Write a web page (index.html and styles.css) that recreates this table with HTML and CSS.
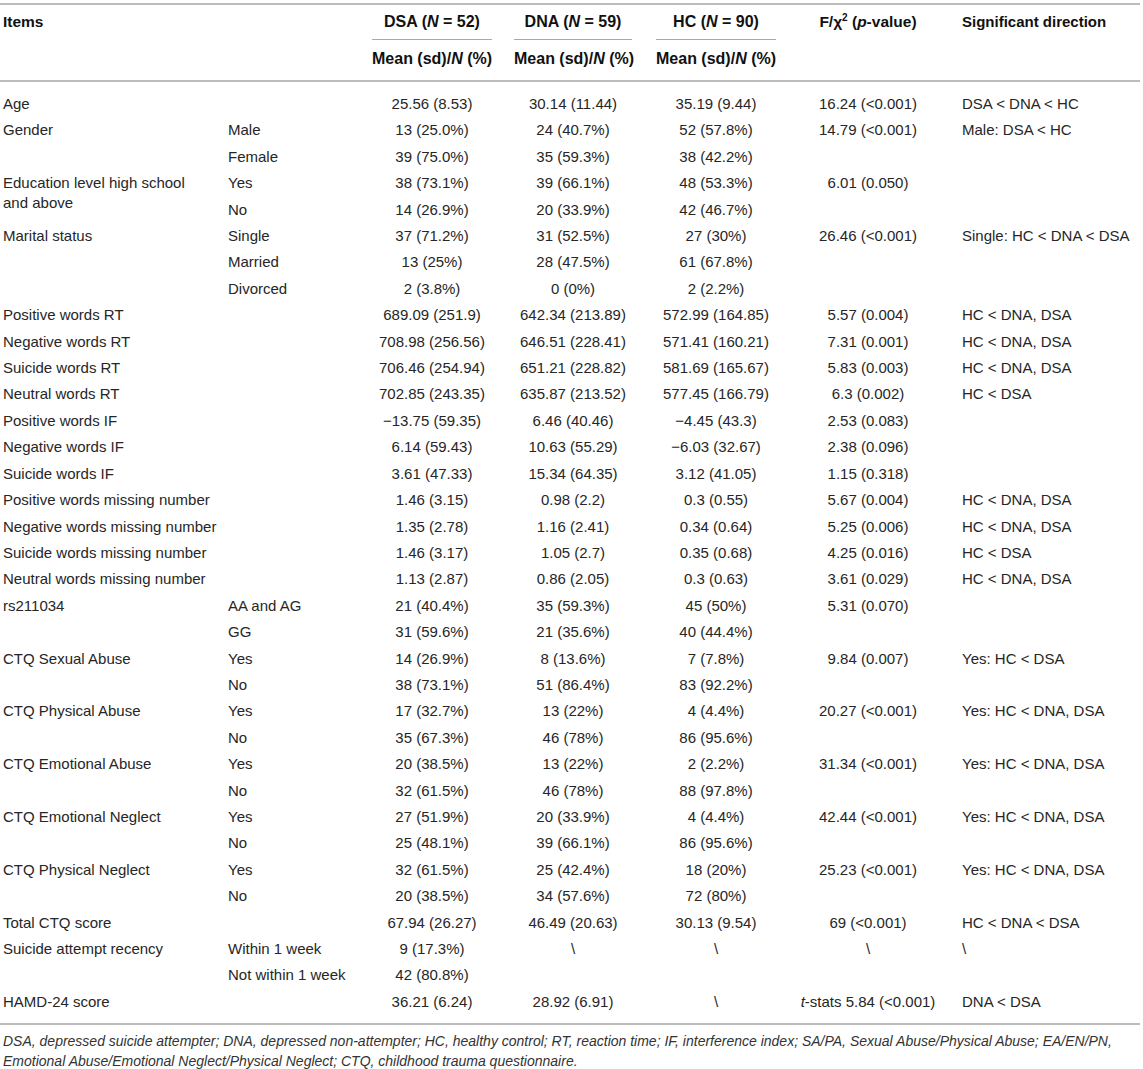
FILE: index.html
```html
<!DOCTYPE html>
<html lang="en">
<head>
<meta charset="utf-8">
<title>Table</title>
<link rel="stylesheet" href="styles.css">
</head>
<body>
<div class="wrap">
<table class="tbl">
<colgroup>
<col class="c1"><col class="c2"><col class="c3"><col class="c4"><col class="c5"><col class="c6"><col class="c7">
</colgroup>
<thead>
<tr class="h1">
<th class="left" rowspan="2" colspan="2">Items</th>
<th class="grp"><div class="ul">DSA (<i>N</i> = 52)</div></th>
<th class="grp g2"><div class="ul">DNA (<i>N</i> = 59)</div></th>
<th class="grp g2"><div class="ul">HC (<i>N</i> = 90)</div></th>
<th class="ctr" rowspan="2">F/χ<sup>2</sup> (<i>p</i>-value)</th>
<th class="left sig" rowspan="2">Significant direction</th>
</tr>
<tr class="h2">
<th class="grp">Mean (sd)/<i>N</i> (%)</th>
<th class="grp g2">Mean (sd)/<i>N</i> (%)</th>
<th class="grp g2">Mean (sd)/<i>N</i> (%)</th>
</tr>
</thead>
<tbody>
<tr class="first"><td colspan="2">Age</td><td>25.56 (8.53)</td><td>30.14 (11.44)</td><td>35.19 (9.44)</td><td>16.24 (&lt;0.001)</td><td class="sig">DSA &lt; DNA &lt; HC</td></tr>
<tr><td>Gender</td><td class="sub">Male</td><td>13 (25.0%)</td><td>24 (40.7%)</td><td>52 (57.8%)</td><td>14.79 (&lt;0.001)</td><td class="sig">Male: DSA &lt; HC</td></tr>
<tr><td></td><td class="sub">Female</td><td>39 (75.0%)</td><td>35 (59.3%)</td><td>38 (42.2%)</td><td></td><td class="sig"></td></tr>
<tr><td class="edu" rowspan="2">Education level high school and above</td><td class="sub">Yes</td><td>38 (73.1%)</td><td>39 (66.1%)</td><td>48 (53.3%)</td><td>6.01 (0.050)</td><td class="sig"></td></tr>
<tr><td class="sub">No</td><td>14 (26.9%)</td><td>20 (33.9%)</td><td>42 (46.7%)</td><td></td><td class="sig"></td></tr>
<tr><td>Marital status</td><td class="sub">Single</td><td>37 (71.2%)</td><td>31 (52.5%)</td><td>27 (30%)</td><td>26.46 (&lt;0.001)</td><td class="sig">Single: HC &lt; DNA &lt; DSA</td></tr>
<tr><td></td><td class="sub">Married</td><td>13 (25%)</td><td>28 (47.5%)</td><td>61 (67.8%)</td><td></td><td class="sig"></td></tr>
<tr><td></td><td class="sub">Divorced</td><td>2 (3.8%)</td><td>0 (0%)</td><td>2 (2.2%)</td><td></td><td class="sig"></td></tr>
<tr><td colspan="2">Positive words RT</td><td>689.09 (251.9)</td><td>642.34 (213.89)</td><td>572.99 (164.85)</td><td>5.57 (0.004)</td><td class="sig">HC &lt; DNA, DSA</td></tr>
<tr><td colspan="2">Negative words RT</td><td>708.98 (256.56)</td><td>646.51 (228.41)</td><td>571.41 (160.21)</td><td>7.31 (0.001)</td><td class="sig">HC &lt; DNA, DSA</td></tr>
<tr><td colspan="2">Suicide words RT</td><td>706.46 (254.94)</td><td>651.21 (228.82)</td><td>581.69 (165.67)</td><td>5.83 (0.003)</td><td class="sig">HC &lt; DNA, DSA</td></tr>
<tr><td colspan="2">Neutral words RT</td><td>702.85 (243.35)</td><td>635.87 (213.52)</td><td>577.45 (166.79)</td><td>6.3 (0.002)</td><td class="sig">HC &lt; DSA</td></tr>
<tr><td colspan="2">Positive words IF</td><td>−13.75 (59.35)</td><td>6.46 (40.46)</td><td>−4.45 (43.3)</td><td>2.53 (0.083)</td><td class="sig"></td></tr>
<tr><td colspan="2">Negative words IF</td><td>6.14 (59.43)</td><td>10.63 (55.29)</td><td>−6.03 (32.67)</td><td>2.38 (0.096)</td><td class="sig"></td></tr>
<tr><td colspan="2">Suicide words IF</td><td>3.61 (47.33)</td><td>15.34 (64.35)</td><td>3.12 (41.05)</td><td>1.15 (0.318)</td><td class="sig"></td></tr>
<tr><td colspan="2">Positive words missing number</td><td>1.46 (3.15)</td><td>0.98 (2.2)</td><td>0.3 (0.55)</td><td>5.67 (0.004)</td><td class="sig">HC &lt; DNA, DSA</td></tr>
<tr><td colspan="2">Negative words missing number</td><td>1.35 (2.78)</td><td>1.16 (2.41)</td><td>0.34 (0.64)</td><td>5.25 (0.006)</td><td class="sig">HC &lt; DNA, DSA</td></tr>
<tr><td colspan="2">Suicide words missing number</td><td>1.46 (3.17)</td><td>1.05 (2.7)</td><td>0.35 (0.68)</td><td>4.25 (0.016)</td><td class="sig">HC &lt; DSA</td></tr>
<tr><td colspan="2">Neutral words missing number</td><td>1.13 (2.87)</td><td>0.86 (2.05)</td><td>0.3 (0.63)</td><td>3.61 (0.029)</td><td class="sig">HC &lt; DNA, DSA</td></tr>
<tr><td>rs211034</td><td class="sub">AA and AG</td><td>21 (40.4%)</td><td>35 (59.3%)</td><td>45 (50%)</td><td>5.31 (0.070)</td><td class="sig"></td></tr>
<tr><td></td><td class="sub">GG</td><td>31 (59.6%)</td><td>21 (35.6%)</td><td>40 (44.4%)</td><td></td><td class="sig"></td></tr>
<tr><td>CTQ Sexual Abuse</td><td class="sub">Yes</td><td>14 (26.9%)</td><td>8 (13.6%)</td><td>7 (7.8%)</td><td>9.84 (0.007)</td><td class="sig">Yes: HC &lt; DSA</td></tr>
<tr><td></td><td class="sub">No</td><td>38 (73.1%)</td><td>51 (86.4%)</td><td>83 (92.2%)</td><td></td><td class="sig"></td></tr>
<tr><td>CTQ Physical Abuse</td><td class="sub">Yes</td><td>17 (32.7%)</td><td>13 (22%)</td><td>4 (4.4%)</td><td>20.27 (&lt;0.001)</td><td class="sig">Yes: HC &lt; DNA, DSA</td></tr>
<tr><td></td><td class="sub">No</td><td>35 (67.3%)</td><td>46 (78%)</td><td>86 (95.6%)</td><td></td><td class="sig"></td></tr>
<tr><td>CTQ Emotional Abuse</td><td class="sub">Yes</td><td>20 (38.5%)</td><td>13 (22%)</td><td>2 (2.2%)</td><td>31.34 (&lt;0.001)</td><td class="sig">Yes: HC &lt; DNA, DSA</td></tr>
<tr><td></td><td class="sub">No</td><td>32 (61.5%)</td><td>46 (78%)</td><td>88 (97.8%)</td><td></td><td class="sig"></td></tr>
<tr><td>CTQ Emotional Neglect</td><td class="sub">Yes</td><td>27 (51.9%)</td><td>20 (33.9%)</td><td>4 (4.4%)</td><td>42.44 (&lt;0.001)</td><td class="sig">Yes: HC &lt; DNA, DSA</td></tr>
<tr><td></td><td class="sub">No</td><td>25 (48.1%)</td><td>39 (66.1%)</td><td>86 (95.6%)</td><td></td><td class="sig"></td></tr>
<tr><td>CTQ Physical Neglect</td><td class="sub">Yes</td><td>32 (61.5%)</td><td>25 (42.4%)</td><td>18 (20%)</td><td>25.23 (&lt;0.001)</td><td class="sig">Yes: HC &lt; DNA, DSA</td></tr>
<tr><td></td><td class="sub">No</td><td>20 (38.5%)</td><td>34 (57.6%)</td><td>72 (80%)</td><td></td><td class="sig"></td></tr>
<tr><td colspan="2">Total CTQ score</td><td>67.94 (26.27)</td><td>46.49 (20.63)</td><td>30.13 (9.54)</td><td>69 (&lt;0.001)</td><td class="sig">HC &lt; DNA &lt; DSA</td></tr>
<tr><td>Suicide attempt recency</td><td class="sub">Within 1 week</td><td>9 (17.3%)</td><td>\</td><td>\</td><td>\</td><td class="sig">\</td></tr>
<tr><td></td><td class="sub">Not within 1 week</td><td>42 (80.8%)</td><td></td><td></td><td></td><td class="sig"></td></tr>
<tr class="last"><td colspan="2">HAMD-24 score</td><td>36.21 (6.24)</td><td>28.92 (6.91)</td><td>\</td><td><i>t</i>-stats 5.84 (&lt;0.001)</td><td class="sig">DNA &lt; DSA</td></tr>
</tbody>
</table>
<div class="note"><i>DSA, depressed suicide attempter; DNA, depressed non-attempter; HC, healthy control; RT, reaction time; IF, interference index; SA/PA, Sexual Abuse/Physical Abuse; EA/EN/PN,<br>Emotional Abuse/Emotional Neglect/Physical Neglect; CTQ, childhood trauma questionnaire.</i></div>
</div>
</body>
</html>
```

FILE: styles.css
```css
html, body {
  margin: 0;
  padding: 0;
  background: #ffffff;
}
body {
  font-family: "Liberation Sans", Arial, Helvetica, sans-serif;
  color: #262626;
}
.wrap {
  width: 1140px;
  margin-top: 3px;
  border-top: 2px solid #bcbcbc;
}
.tbl {
  width: 1140px;
  table-layout: fixed;
  border-collapse: separate;
  border-spacing: 0;
  font-size: 15px;
  line-height: 18.4px;
}
.c1 { width: 214px; }
.c2 { width: 148px; }
.c3 { width: 140px; }
.c4 { width: 142px; }
.c5 { width: 144px; }
.c6 { width: 160px; }
.c7 { width: 192px; }
th {
  font-weight: bold;
  color: #111111;
  white-space: nowrap;
  line-height: 18px;
  font-size: 15.5px;
}
th.grp {
  font-size: 16px;
}
.h1 th {
  padding: 8px 0 0 0;
  vertical-align: top;
}
.h1 th.left { text-align: left; padding-left: 3px; }
.h1 th.ctr { text-align: center; }
.h1 th.sig { padding-left: 14px; font-size: 15px; }
.h1 th.grp {
  padding: 8px 10px 0 10px;
  text-align: center;
}
.h1 th.g2 { padding-left: 12px; padding-right: 12px; }
.ul {
  padding-bottom: 8px;
  border-bottom: 1px solid #a9a9a9;
}
.h2 th.grp {
  padding: 10px 10px 12px 10px;
  text-align: center;
}
.h2 th.g2 { padding-left: 12px; padding-right: 12px; }
sup {
  font-size: 10px;
  line-height: 0;
  vertical-align: 6px;
}
td {
  padding: 4px 0;
  text-align: center;
  vertical-align: top;
  white-space: nowrap;
}
td:first-child {
  text-align: left;
  padding-left: 3px;
  padding-right: 4px;
}
td.edu {
  white-space: normal;
  padding-right: 12px;
  padding-top: 3px;
  line-height: 20px;
}
td.sub {
  text-align: left;
  padding-left: 14px;
}
td.sig {
  text-align: left;
  padding-left: 14px;
}
.first td {
  border-top: 2px solid #bcbcbc;
  padding-top: 13px;
}
.last td {
  padding-bottom: 12px;
}
.note {
  border-top: 2px solid #bcbcbc;
  padding: 6px 0 0 3px;
  font-size: 14px;
  line-height: 20px;
  color: #333333;
  white-space: nowrap;
}
```
